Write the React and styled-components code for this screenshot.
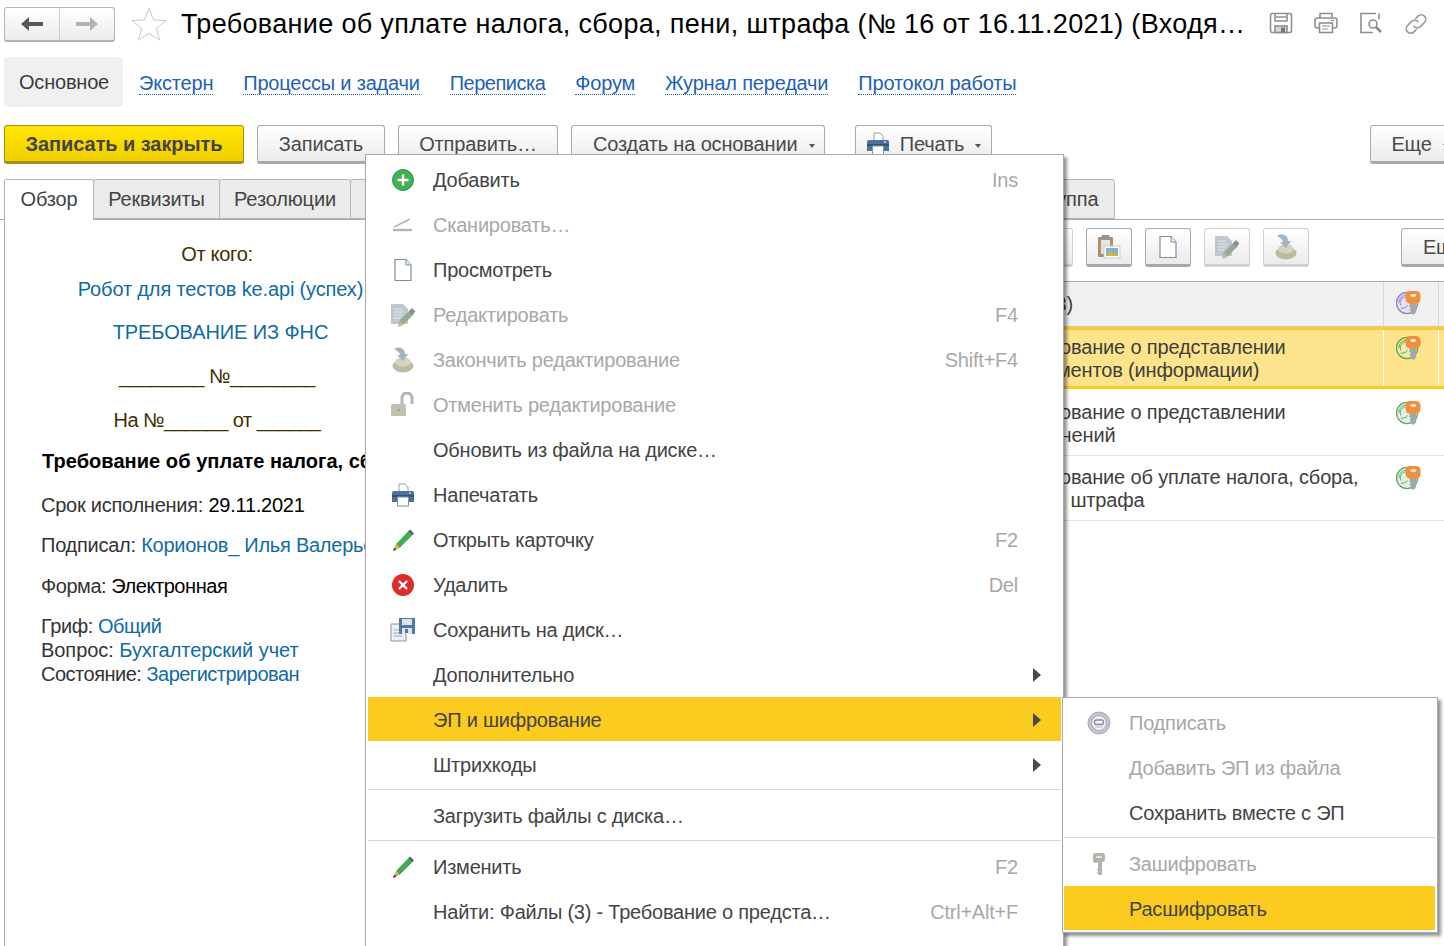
import React from 'react'
import styled, { createGlobalStyle } from 'styled-components'

const Global = createGlobalStyle`
  html, body { margin: 0; padding: 0; background: #fff; }
  body { font-family: "Liberation Sans", Arial, sans-serif; color: #444; }
`

const Page = styled.div`
  position: relative;
  width: 1444px;
  height: 946px;
  overflow: hidden;
  background: #fff;
  font-size: 20px;
`

/* ---------- icons ---------- */
const BackIcon = () => (
  <svg width="22" height="14" viewBox="0 0 22 14"><path d="M0 7 8 0v5h14v4H8v5z" fill="#595959" /></svg>
)
const ForwardIcon = () => (
  <svg width="22" height="14" viewBox="0 0 22 14"><path d="M22 7 14 0v5H0v4h14v5z" fill="#b4b4b4" /></svg>
)
const StarIcon = () => (
  <svg width="36" height="34" viewBox="0 0 36 34">
    <path d="M18 1.5 22.6 13 35 13.6 25.3 21.4 28.6 33 18 26.4 7.4 33 10.7 21.4 1 13.6 13.4 13z" fill="#fff" stroke="#c9c9c9" strokeWidth="1" />
  </svg>
)
const SaveTop = () => (
  <svg width="24" height="22" viewBox="0 0 24 22" fill="none" stroke="#8f8f8f" strokeWidth="1.6">
    <rect x="1.5" y="1.5" width="21" height="19" rx="2" />
    <path d="M6 2v7h12V2M7 5h10" />
    <rect x="6" y="14" width="12" height="6.5" fill="#d8d8d8" />
    <rect x="12" y="15.5" width="4" height="5" fill="#777" stroke="none" />
  </svg>
)
const PrintTop = () => (
  <svg width="24" height="22" viewBox="0 0 24 22" fill="none" stroke="#8f8f8f" strokeWidth="1.6">
    <path d="M6 6V1.5h12V6" />
    <rect x="1" y="6" width="22" height="10" rx="2.5" />
    <rect x="5.5" y="11" width="13" height="9.5" fill="#fff" />
    <path d="M8 14h8M8 17h6M17 8.5h3" strokeWidth="1.2" />
  </svg>
)
const PreviewTop = () => (
  <svg width="24" height="22" viewBox="0 0 24 22" fill="none" stroke="#8f8f8f" strokeWidth="1.6">
    <path d="M17 1.5H2v19h12M20 1.5v6" />
    <circle cx="14" cy="12" r="4" />
    <path d="M17 15l5 5" strokeWidth="2.6" />
  </svg>
)
const LinkTop = () => (
  <svg width="24" height="24" viewBox="0 0 24 24" fill="none" stroke="#9a9a9a" strokeWidth="1.7" strokeLinecap="round">
    <path d="M10 14.5a4.5 4.5 0 0 0 6.4 0l4-4a4.5 4.5 0 0 0-6.4-6.4l-2 2" />
    <path d="M14 9.500a4.500 4.500 0 0 0-6.400 0l-4 4a4.500 4.500 0 0 0 6.400 6.400l2-2" />
  </svg>
)
const AddIcon = () => (
  <svg width="24" height="24" viewBox="0 0 24 24">
    <circle cx="12" cy="12" r="10.500" fill="#3fb254" stroke="#2f9444" />
    <path d="M12 6.500v11M6.500 12h11" stroke="#fff" strokeWidth="2.400" />
  </svg>
)
const ScanIcon = () => (
  <svg width="24" height="24" viewBox="0 0 24 24" fill="none" stroke="#b4b4b4" strokeWidth="1.800">
    <path d="M3 14 19 6" strokeWidth="1.500" />
    <path d="M2 17h19" strokeWidth="2.400" />
  </svg>
)
const PageIcon = () => (
  <svg width="20" height="24" viewBox="0 0 20 24">
    <path d="M2 1.500h11l5 5.500v15.500H2z" fill="#fff" stroke="#7b8da1" strokeWidth="1.200" />
    <path d="M13 1.500V7h5" fill="#eee" stroke="#7b8da1" strokeWidth="1" />
  </svg>
)
const EditIcon = () => (
  <svg width="26" height="26" viewBox="0 0 26 26">
    <path d="M1 2h12l5 5v15H1z" fill="#bfc7cf" />
    <path d="M4 7h8M4 10h10M4 13h8M4 16h6" stroke="#e6e9ec" strokeWidth="1.200" />
    <path d="M8 24l2-6L20 8l4 4-10 10z" fill="#94ab91" />
    <path d="M20 8l3-3 3.500 3.500L23 12z" fill="#8a8f96" transform="translate(-1 1)" />
    <path d="M8 25l2-6 4 4z" fill="#cbb99a" />
  </svg>
)
const FinishIcon = () => (
  <svg width="24" height="26" viewBox="0 0 24 26">
    <ellipse cx="12" cy="19" rx="10.500" ry="6.500" fill="#bdb9a2" />
    <ellipse cx="12" cy="15" rx="8" ry="4.500" fill="#d6d3c1" />
    <path d="M3 2c5-3 11-1 11 5h3l-5 7-6-6h3c0-2-2-4-6-6z" fill="#9fb4c5" />
  </svg>
)
const UnlockIcon = () => (
  <svg width="26" height="26" viewBox="0 0 26 26">
    <rect x="1" y="12" width="15" height="12" rx="1.500" fill="#c3c0ac" />
    <circle cx="8.500" cy="18" r="1.300" fill="#a5a290" />
    <path d="M12 12V6a5 5 0 0 1 10 0v6" fill="none" stroke="#b4b4b4" strokeWidth="3" />
  </svg>
)
const PrinterIcon = () => (
  <svg width="24" height="24" viewBox="0 0 24 24">
    <path d="M8 1h6l3 3v7H8z" fill="#fff" stroke="#8fa2b6" strokeWidth="1" />
    <path d="M3 8h18a2 2 0 0 1 2 2v9H1v-9a2 2 0 0 1 2-2z" fill="#4d7199" />
    <rect x="1" y="12" width="22" height="2" fill="#2e5279" />
    <rect x="6.500" y="14" width="11" height="9" fill="#fff" stroke="#7e93a8" strokeWidth="1" />
    <rect x="18" y="9.500" width="2" height="1" fill="#fff" />
  </svg>
)
const PencilIcon = () => (
  <svg width="24" height="24" viewBox="0 0 24 24">
    <path d="M5 16 17 3.500l4 4L8.500 20z" fill="#42ad4f" />
    <path d="M17 3.500 19 1.500l4 4-2 2z" fill="#55606d" />
    <path d="M5 16l3.500 4L2 23z" fill="#e3ae5a" />
    <path d="M2 23l1.200-3.500 2.300 2.300z" fill="#444" />
  </svg>
)
const DeleteIcon = () => (
  <svg width="24" height="24" viewBox="0 0 24 24">
    <circle cx="12" cy="12" r="11" fill="#dc2c2c" />
    <path d="M8 8l8 8M16 8l-8 8" stroke="#fff" strokeWidth="2.400" />
  </svg>
)
const SaveDiskIcon = () => (
  <svg width="26" height="26" viewBox="0 0 26 26">
    <path d="M1 7h12l3 3v14H1z" fill="#eef1f4" stroke="#8193a5" />
    <path d="M3.500 13h9M3.500 16h9M3.500 19h9" stroke="#9aa7b4" />
    <rect x="9" y="1" width="16" height="16" fill="#4d7ba8" />
    <rect x="12" y="2" width="10" height="6" fill="#dbe5ee" />
    <rect x="12" y="11" width="10" height="6" fill="#dfe3e6" />
    <rect x="15" y="12" width="3" height="4" fill="#5d7890" />
  </svg>
)
const ArrowIcon = () => (
  <svg width="8" height="14" viewBox="0 0 8 14"><path d="M0 0l8 7-8 7z" fill="#4a4a4a" /></svg>
)
const SignIcon = () => (
  <svg width="24" height="24" viewBox="0 0 24 24">
    <circle cx="12" cy="12" r="11" fill="#c6c4d2" stroke="#a9a7b8" />
    <circle cx="12" cy="12" r="7.500" fill="#f1f0f5" stroke="#a9a7b8" />
    <rect x="7.500" y="9" width="9" height="4.500" rx="2" fill="none" stroke="#8a889c" strokeWidth="1.300" />
    <path d="M8 16h8" stroke="#c0bfcc" />
  </svg>
)
const KeyIcon = () => (
  <svg width="16" height="22" viewBox="0 0 16 22">
    <path d="M2 3a3 3 0 0 1 3-3h6a3 3 0 0 1 3 3v3a3 3 0 0 1-3 3v13H8l-2-2 1-1.500-1-1.500 1-1.500V9a3 3 0 0 1-5-3z" fill="#b3b3ad" />
    <rect x="5" y="3" width="6" height="2" rx="1" fill="#e6e6e2" />
  </svg>
)
const KeyBadge = ({ ring, fill }) => (
  <svg width="25" height="25" viewBox="0 0 26 26">
    <circle cx="11.500" cy="13.500" r="11" fill={fill} stroke={ring} strokeWidth="1.400" />
    <path d="M3 13.500a8.500 8.500 0 0 1 8-8.500M5 16a6.500 6.500 0 0 1 6-9M5 19c3 0 6-1 7-3" fill="none" stroke={ring} strokeWidth="1" />
    <path d="M14 13h7v10l-2 2.500h-2L14 23.500l1.500-1.500-1.500-1.500 1.500-1.500-1.500-1.500z" fill="#a2a8a5" />
    <rect x="10" y="1" width="15.500" height="13" rx="4.500" fill="#ee913f" />
    <rect x="15" y="4.500" width="6" height="2.500" rx="1.200" fill="#fff2de" />
  </svg>
)
const ClipboardIcon = () => (
  <svg width="24" height="26" viewBox="0 0 24 26">
    <rect x="1" y="3" width="15" height="20" rx="1" fill="#b98a6c" />
    <rect x="4" y="6" width="9" height="14" fill="#e9e4de" />
    <rect x="4.500" y="1" width="8" height="4" rx="1" fill="#8d98a3" />
    <rect x="7" y="12" width="16" height="12" fill="#fff" stroke="#c9c9c9" />
    <rect x="9" y="14" width="12" height="8" fill="#7fb0d6" />
    <path d="M9 22l4-5 3 3 2-2 3 4z" fill="#d9b23c" />
  </svg>
)

/* ---------- header ---------- */
const Header = styled.header`
  display: flex;
  align-items: center;
  height: 36px;
  padding: 6px 0 0 4px;
`
const NavGroup = styled.div`
  display: flex;
  width: 111px;
  height: 35px;
  box-sizing: border-box;
  border: 1px solid #b5b5b5;
  border-bottom: 2px solid #b0b0b0;
  border-radius: 3px;
  background: linear-gradient(#fff, #ececec);
`
const NavButton = styled.div`
  flex: 1;
  display: flex;
  align-items: center;
  justify-content: center;
  & + & { border-left: 1px solid #d0d0d0; }
`
const StarWrap = styled.div`
  margin-left: 16px;
  display: flex;
`
const Title = styled.h1`
  margin: 0 0 0 14px;
  width: 1073px;
  font-size: 27px;
  font-weight: 400;
  color: #000;
  white-space: nowrap;
  letter-spacing: 0.33px;
`
const HeaderTools = styled.div`
  display: flex;
  gap: 21px;
  margin-left: 15px;
`

/* ---------- section tabs ---------- */
const Sections = styled.nav`
  display: flex;
  align-items: center;
  height: 50px;
  margin: 15px 0 0 4px;
  gap: 30px;
  letter-spacing: -0.2px;
`
const SectionActive = styled.div`
  display: flex;
  align-items: center;
  height: 100%;
  padding: 0 14px 0 15px;
  margin-right: -14px;
  background: #f0f0f0;
  border-radius: 4px;
  color: #3c3c3c;
`
const SectionLink = styled.a`
  margin-top: 3px;
  color: #1d5fb8;
  line-height: 21px;
  border-bottom: 1px dotted #1d5fb8;
  letter-spacing: ${p => p.$ls ?? -0.2}px;
`

/* ---------- command bar ---------- */
const CommandBar = styled.div`
  display: flex;
  margin: 18px -30px 0 4px;
`
const Button = styled.div`
  display: flex;
  align-items: center;
  justify-content: ${p => p.$start ? 'flex-start' : 'center'};
  gap: 8px;
  box-sizing: border-box;
  width: ${p => p.$w}px;
  height: 39px;
  padding: 1px 0 0 ${p => p.$start || 0}px;
  margin-left: ${p => p.$ml || 0}px;
  border: 1px solid ${p => p.$disabled ? '#d0d0d0' : '#aaa'};
  border-bottom: 3px solid ${p => p.$disabled ? '#cfcfcf' : '#a8a8a8'};
  border-radius: 3px;
  background: linear-gradient(#fff, #ebebeb);
  color: #4a4a4a;
  white-space: nowrap;
  letter-spacing: -0.15px;
`
const PrimaryButton = styled(Button)`
  border: 1px solid #a8900f;
  border-bottom: 3px solid #a8900f;
  background: linear-gradient(#ffe600, #f0cf00);
  font-weight: 700;
  color: #444;
  letter-spacing: -0.08px;
`
const Caret = styled.span`
  width: 0;
  height: 0;
  margin: 3px 0 0 3px;
  border-left: 3.5px solid transparent;
  border-right: 3.5px solid transparent;
  border-top: 4px solid #555;
`
const PrintSlot = styled.span`
  display: flex;
  margin-right: 2px;
`

/* ---------- tabs ---------- */
const TabRow = styled.div`
  display: flex;
  align-items: flex-end;
  height: 40px;
  margin-top: 15px;
  padding-left: 4px;
  border-bottom: 1px solid #aaa;
`
const Tab = styled.div`
  display: flex;
  align-items: center;
  justify-content: center;
  box-sizing: border-box;
  width: ${p => p.$w}px;
  height: ${p => p.$active ? 41 : 40}px;
  padding-right: ${p => p.$pr || 0}px;
  padding-bottom: ${p => p.$active ? 2 : 0}px;
  margin-bottom: ${p => p.$active ? -1 : 0}px;
  margin-left: ${p => p.$first ? 0 : -1}px;
  border: 1px solid #b4b4b4;
  border-bottom: ${p => p.$active ? 'none' : '1px solid #b4b4b4'};
  border-radius: 3px 3px 0 0;
  background: ${p => p.$active ? '#fff' : '#ebebeb'};
  color: #444;
  white-space: nowrap;
  letter-spacing: -0.15px;
`

/* ---------- body ---------- */
const Body = styled.div`
  display: grid;
  grid-template-columns: 436px 1fr;
  height: 727px;
`
const DocPanel = styled.section`
  margin-left: 4px;
  padding-top: 22px;
  border-left: 1px solid #aaa;
`
const DocCenter = styled.div`
  margin-top: ${p => p.$mt || 0}px;
  padding-right: ${p => p.$pr || 0}px;
  text-align: center;
  line-height: 24px;
  height: 24px;
  white-space: nowrap;
  letter-spacing: ${p => p.$ls ?? -0.3}px;
  color: ${p => p.$blue ? '#0f6aa6' : '#403000'};
`
const DocLine = styled.div`
  margin: ${p => p.$mt || 0}px 0 0 36px;
  line-height: 24px;
  height: 24px;
  white-space: nowrap;
  color: #333;
  letter-spacing: ${p => p.$ls ?? -0.25}px;
`
const DocBold = styled(DocLine)`
  margin-left: 37px;
  font-weight: 700;
  color: #000;
  letter-spacing: 0.05px;
`
const DocValue = styled.span`
  color: #000;
`
const DocLink = styled.span`
  color: #0f6aa6;
`

const ListPanel = styled.section`
  display: flex;
  flex-direction: column;
  overflow: hidden;
`
const ListBar = styled.div`
  display: flex;
  align-items: flex-start;
  padding: 8px 0 0 591px;
  height: 62px;
  box-sizing: border-box;
  margin-right: -60px;
  border-bottom: 1px solid #aaa;
`
const IconButton = styled(Button)`
  width: 46px;
  margin-left: ${p => p.$ml ?? 13}px;
`
const Row = styled.div`
  display: grid;
  grid-template-columns: 580px 367px 55px 1fr;
  box-sizing: border-box;
  height: ${p => p.$h}px;
  background: ${p => p.$selected ? '#fde38b' : p.$head ? '#f0f0f0' : '#fff'};
  border-top: ${p => p.$selected ? '3px solid #fbcc24' : 'none'};
  border-bottom: ${p => p.$selected ? '3px solid #fbcc24' : p.$head ? '1px solid #ccc' : '1px solid #e4e4e4'};
`
const Cell = styled.div`
  padding: ${p => p.$pt ?? 8}px 0 0 ${p => p.$pl || 0}px;
  line-height: 23px;
  color: #3e3e3e;
  letter-spacing: -0.15px;
`
const BadgeCell = styled(Cell)`
  padding: ${p => p.$pt ?? 8}px 0 0 12px;
  border-left: 1px solid ${p => p.$line};
`
const EndCell = styled.div`
  border-left: 1px solid ${p => p.$line};
`

/* ---------- menus (lie over the page) ---------- */
const Menu = styled.div`
  position: absolute;
  left: ${p => p.$left}px;
  top: ${p => p.$top}px;
  width: ${p => p.$w}px;
  box-sizing: border-box;
  padding: ${p => p.$pad};
  background: #fff;
  border: 1px solid #a9a9a9;
  box-shadow: 3px 3px 3px rgba(0, 0, 0, 0.42);
`
const MenuRow = styled.div`
  display: flex;
  align-items: center;
  height: 45px;
  box-sizing: border-box;
  padding-top: 2px;
  background: ${p => p.$active ? '#fbcb1f' : 'transparent'};
  color: ${p => p.$off ? '#a8a8a8' : '#444'};
  border-bottom: 1px solid ${p => p.$active ? '#fff' : 'transparent'};
  letter-spacing: -0.22px;
`
const MenuIcon = styled.span`
  display: flex;
  align-items: center;
  justify-content: center;
  box-sizing: border-box;
  padding-left: 5px;
  width: 65px;
  height: 26px;
`
const MenuText = styled.span`
  flex: 1;
  white-space: nowrap;
`
const Shortcut = styled.span`
  margin-right: 43px;
  color: #a8a8a8;
`
const SubArrow = styled.span`
  display: flex;
  margin-right: 20px;
`
const MenuSep = styled.div`
  height: 1px;
  margin: 2px 0 3px;
  background: #dcd8ca;
`

const mainMenu = [
  { text: 'Добавить', icon: <AddIcon />, key: 'Ins' },
  { text: 'Сканировать…', icon: <ScanIcon />, off: true },
  { text: 'Просмотреть', icon: <PageIcon /> },
  { text: 'Редактировать', icon: <EditIcon />, key: 'F4', off: true },
  { text: 'Закончить редактирование', icon: <FinishIcon />, key: 'Shift+F4', off: true },
  { text: 'Отменить редактирование', icon: <UnlockIcon />, off: true },
  { text: 'Обновить из файла на диске…' },
  { text: 'Напечатать', icon: <PrinterIcon /> },
  { text: 'Открыть карточку', icon: <PencilIcon />, key: 'F2' },
  { text: 'Удалить', icon: <DeleteIcon />, key: 'Del' },
  { text: 'Сохранить на диск…', icon: <SaveDiskIcon /> },
  { text: 'Дополнительно', sub: true },
  { text: 'ЭП и шифрование', sub: true, active: true },
  { text: 'Штрихкоды', sub: true },
  { sep: true },
  { text: 'Загрузить файлы с диска…' },
  { sep: true },
  { text: 'Изменить', icon: <PencilIcon />, key: 'F2' },
  { text: 'Найти: Файлы (3) - Требование о предста…', key: 'Ctrl+Alt+F' },
]

const subMenu = [
  { text: 'Подписать', icon: <SignIcon />, off: true },
  { text: 'Добавить ЭП из файла', off: true },
  { text: 'Сохранить вместе с ЭП' },
  { sep: true },
  { text: 'Зашифровать', icon: <KeyIcon />, off: true },
  { text: 'Расшифровать', active: true },
]

const renderRows = items =>
  items.map((it, i) =>
    it.sep ? (
      <MenuSep key={i} />
    ) : (
      <MenuRow key={i} $off={it.off} $active={it.active}>
        <MenuIcon>{it.icon}</MenuIcon>
        <MenuText>{it.text}</MenuText>
        {it.key && <Shortcut>{it.key}</Shortcut>}
        {it.sub && <SubArrow><ArrowIcon /></SubArrow>}
      </MenuRow>
    )
  )

const sections = [
  { text: 'Экстерн' },
  { text: 'Процессы и задачи' },
  { text: 'Переписка', ls: -0.5 },
  { text: 'Форум' },
  { text: 'Журнал передачи' },
  { text: 'Протокол работы' },
]

export default function App() {
  return (
    <Page>
      <Global />
      <Header>
        <NavGroup>
          <NavButton><BackIcon /></NavButton>
          <NavButton><ForwardIcon /></NavButton>
        </NavGroup>
        <StarWrap><StarIcon /></StarWrap>
        <Title>Требование об уплате налога, сбора, пени, штрафа (№ 16 от 16.11.2021) (Входя…</Title>
        <HeaderTools>
          <SaveTop />
          <PrintTop />
          <PreviewTop />
          <LinkTop />
        </HeaderTools>
      </Header>

      <Sections>
        <SectionActive>Основное</SectionActive>
        {sections.map(s => <SectionLink key={s.text} $ls={s.ls}>{s.text}</SectionLink>)}
      </Sections>

      <CommandBar>
        <PrimaryButton $w={240}>Записать и закрыть</PrimaryButton>
        <Button $w={128} $ml={13}>Записать</Button>
        <Button $w={160} $ml={13}>Отправить…</Button>
        <Button $w={254} $ml={13} $start={21}>Создать на основании <Caret /></Button>
        <Button $w={137} $ml={30}><PrintSlot><PrinterIcon /></PrintSlot> Печать <Caret /></Button>
        <Button $w={100} $ml={378}>Еще <Caret /></Button>
      </CommandBar>

      <TabRow>
        <Tab $first $active $w={90}>Обзор</Tab>
        <Tab $w={127}>Реквизиты</Tab>
        <Tab $w={132}>Резолюции</Tab>
        <Tab $w={600}>Файлы (3)</Tab>
        <Tab $w={166} $pr={10}>Рабочая группа</Tab>
      </TabRow>

      <Body>
        <DocPanel>
          <DocCenter $pr={7}>От кого:</DocCenter>
          <DocCenter $blue $ls={-0.15} $mt={11}>Робот для тестов ke.api (успех)</DocCenter>
          <DocCenter $blue $ls={-0.1} $mt={19}>ТРЕБОВАНИЕ ИЗ ФНС</DocCenter>
          <DocCenter $pr={7} $ls={-0.5} $mt={20}>________ №________</DocCenter>
          <DocCenter $pr={7} $ls={-0.5} $mt={20}>На №______ от ______</DocCenter>
          <DocBold $mt={17}>Требование об уплате налога, сбора, пени, штрафа</DocBold>
          <DocLine $mt={20}>Срок исполнения: <DocValue>29.11.2021</DocValue></DocLine>
          <DocLine $mt={16}>Подписал: <DocLink>Корионов_ Илья Валерьевич</DocLink></DocLine>
          <DocLine $ls={-0.45} $mt={17}>Форма: <DocValue>Электронная</DocValue></DocLine>
          <DocLine $ls={-0.45} $mt={16}>Гриф: <DocLink>Общий</DocLink></DocLine>
          <DocLine $ls={-0.05}>Вопрос: <DocLink>Бухгалтерский учет</DocLink></DocLine>
          <DocLine $ls={-0.5}>Состояние: <DocLink>Зарегистрирован</DocLink></DocLine>
        </DocPanel>

        <ListPanel>
          <ListBar>
            <IconButton $ml={0} $disabled><PageIcon /></IconButton>
            <IconButton><ClipboardIcon /></IconButton>
            <IconButton><PageIcon /></IconButton>
            <IconButton $disabled><EditIcon /></IconButton>
            <IconButton $disabled><FinishIcon /></IconButton>
            <Button $w={84} $ml={92}>Еще</Button>
          </ListBar>
          <Row $head $h={45}>
            <Cell />
            <Cell $pt={11} $pl={33}>(3)</Cell>
            <BadgeCell $line="#d8d8d8" $pt={8}><KeyBadge ring="#8f85c4" fill="#e4e0f2" /></BadgeCell>
            <EndCell $line="#d8d8d8" />
          </Row>
          <Row $selected $h={62}>
            <Cell $pt={6} />
            <Cell $pt={6}>Требование о представлении<br />документов (информации)</Cell>
            <BadgeCell $line="#fff" $pt={5}><KeyBadge ring="#6aa63c" fill="#e6edb5" /></BadgeCell>
            <EndCell $line="#fff" />
          </Row>
          <Row $h={67}>
            <Cell />
            <Cell $pt={12}>Требование о представлении<br />изменений</Cell>
            <BadgeCell $line="transparent" $pt={11}><KeyBadge ring="#65a96c" fill="#e2f0e0" /></BadgeCell>
            <EndCell $line="transparent" />
          </Row>
          <Row $h={65}>
            <Cell />
            <Cell $pt={10}>Требование об уплате налога, сбора,<br />пени, штрафа</Cell>
            <BadgeCell $line="transparent" $pt={9}><KeyBadge ring="#65a96c" fill="#e2f0e0" /></BadgeCell>
            <EndCell $line="transparent" />
          </Row>
        </ListPanel>
      </Body>

      <Menu $left={365} $top={154} $w={699} $pad="2px 2px 30px 2px">
        {renderRows(mainMenu)}
      </Menu>
      <Menu $left={1062} $top={697} $w={376} $pad="2px 2px 1px 1px">
        {renderRows(subMenu)}
      </Menu>
    </Page>
  )
}
